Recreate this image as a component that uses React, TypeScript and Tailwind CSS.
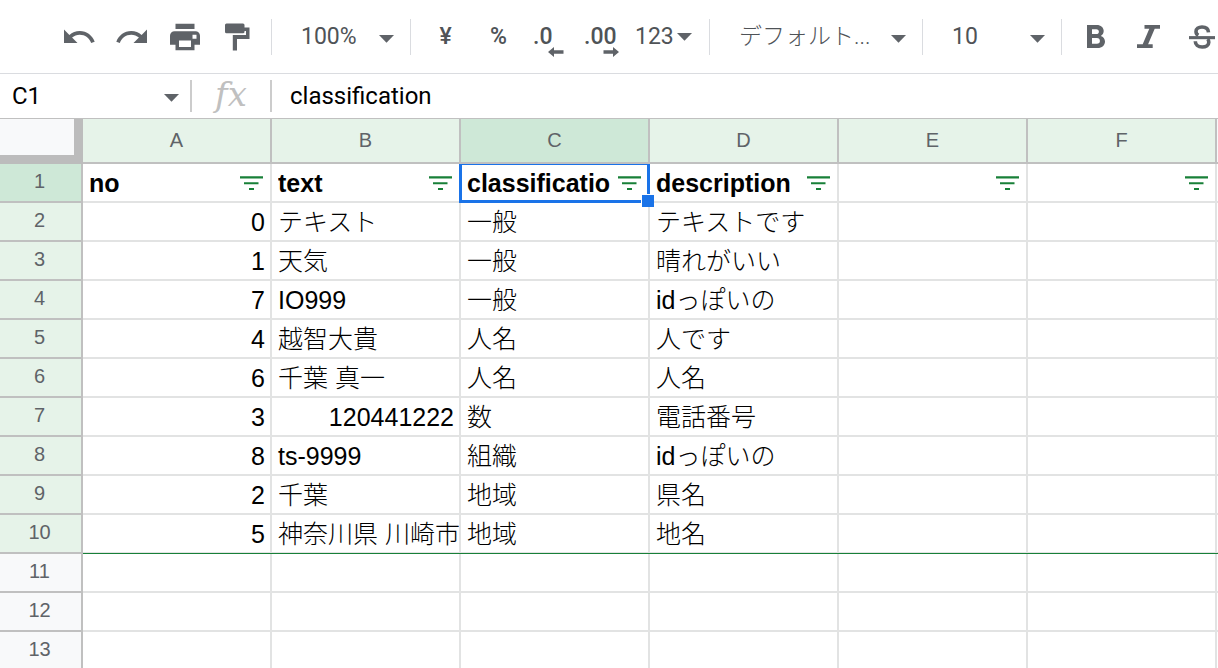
import type { ReactNode } from "react";

type Row = { no: string; text: string; cls: string; desc: string };

const columns = ["A", "B", "C", "D", "E", "F"];
const titles = ["no", "text", "classification", "description", "", ""];

const rows: Row[] = [
  { no: "0", text: "テキスト", cls: "一般", desc: "テキストです" },
  { no: "1", text: "天気", cls: "一般", desc: "晴れがいい" },
  { no: "7", text: "IO999", cls: "一般", desc: "idっぽいの" },
  { no: "4", text: "越智大貴", cls: "人名", desc: "人です" },
  { no: "6", text: "千葉 真一", cls: "人名", desc: "人名" },
  { no: "3", text: "120441222", cls: "数", desc: "電話番号" },
  { no: "8", text: "ts-9999", cls: "組織", desc: "idっぽいの" },
  { no: "2", text: "千葉", cls: "地域", desc: "県名" },
  { no: "5", text: "神奈川県 川崎市", cls: "地域", desc: "地名" },
];

const emptyRows = [11, 12, 13];

const Caret = () => (
  <svg className="block h-2 w-[15px]" viewBox="0 0 15 8" fill="#5f6368" aria-hidden="true">
    <path d="M0 0h15L7.500 7.800z" />
  </svg>
);

const Separator = () => <div className="h-9 w-px shrink-0 bg-[#dadce0]" />;

function ToolButton({ label, children }: { label: string; children: ReactNode }) {
  return (
    <button
      type="button"
      aria-label={label}
      className="relative flex h-12 w-[53px] shrink-0 items-center justify-center font-medium"
    >
      {children}
    </button>
  );
}

function ToolSelect({ label, value, width }: { label: string; value: string; width: string }) {
  return (
    <div className={`relative h-12 shrink-0 ${width}`}>
      <select
        aria-label={label}
        className="h-full w-full appearance-none bg-transparent pt-0.5 pl-[29px] outline-none"
      >
        <option>{value}</option>
      </select>
      <div className="pointer-events-none absolute right-4 top-[22px]">
        <Caret />
      </div>
    </div>
  );
}

const icon = "block h-9 w-9";

function Toolbar() {
  return (
    <div
      role="toolbar"
      aria-label="ツールバー"
      className="flex h-[74px] shrink-0 items-center overflow-hidden border-b border-[#dadce0] pl-[52px] text-[23px] text-[#4f5357]"
    >
      <ToolButton label="元に戻す">
        <svg className={icon} viewBox="0 0 24 24" fill="#5f6368">
          <path d="M12.500 8c-2.650 0-5.050.99-6.900 2.600L2 7v9h9l-3.620-3.620c1.390-1.160 3.160-1.880 5.120-1.880 3.540 0 6.550 2.310 7.600 5.500l2.370-.78C21.080 11.030 17.150 8 12.500 8z" />
        </svg>
      </ToolButton>
      <ToolButton label="やり直し">
        <svg className={icon} viewBox="0 0 24 24" fill="#5f6368">
          <path d="M18.400 10.600C16.550 8.990 14.150 8 11.500 8c-4.650 0-8.580 3.030-9.960 7.220L3.900 16c1.050-3.190 4.050-5.500 7.600-5.500 1.950 0 3.730.72 5.120 1.880L13 16h9V7l-3.600 3.600z" />
        </svg>
      </ToolButton>
      <ToolButton label="印刷">
        <svg className={icon} viewBox="0 0 36 36" fill="#5f6368">
          <path
            fillRule="evenodd"
            d="M8.500 4.700h19v5.200h-19zM7.500 12.200h21a4.500 4.500 0 0 1 4.500 4.500v9h-5.500v5.500h-19v-5.500H3v-9a4.500 4.500 0 0 1 4.500-4.500zM12 21.500v6.500h12v-6.500zM25.500 15.800v4h4v-4z"
          />
        </svg>
      </ToolButton>
      <ToolButton label="書式を貼り付け">
        <svg className={icon} viewBox="0 0 36 36" fill="#5f6368">
          <path d="M6.500 4.500h16.500a1.500 1.500 0 0 1 1.500 1.500v2.500h5V20H17v11.500h-4.200V16h13.200v-4h-1.500v.7a1.500 1.500 0 0 1-1.500 1.500H6.500A1.500 1.500 0 0 1 5 12.700V6a1.500 1.500 0 0 1 1.500-1.500z" />
        </svg>
      </ToolButton>
      <div className="w-[7px] shrink-0" />
      <Separator />
      <ToolSelect label="ズーム" value="100%" width="w-[138px]" />
      <Separator />
      <div className="w-2 shrink-0" />
      <ToolButton label="通貨の表示形式">
        <span className="pt-0.5">¥</span>
      </ToolButton>
      <ToolButton label="パーセント表示形式">
        <span className="pt-0.5">%</span>
      </ToolButton>
      <ToolButton label="小数点以下の桁数を減らす">
        <span className="w-full pt-0.5 pl-2 text-left">.0</span>
        <svg className="absolute right-3.5 top-[34px] h-2.5 w-4" viewBox="0 0 16 10" fill="#5f6368">
          <path d="M0 5l6-5v3.200h9.500v3.600H6V10z" />
        </svg>
      </ToolButton>
      <ToolButton label="小数点以下の桁数を増やす">
        <span className="w-full pt-0.5 pl-1.5 text-left">.00</span>
        <svg className="absolute right-3 top-[34px] h-2.5 w-4" viewBox="0 0 16 10" fill="#5f6368">
          <path d="M16 5l-6-5v3.200H.5v3.600H10V10z" />
        </svg>
      </ToolButton>
      <button type="button" className="flex h-12 w-[78px] shrink-0 items-center gap-[3px] pl-1">
        <span className="pt-0.5">123</span>
        <Caret />
      </button>
      <Separator />
      <ToolSelect label="フォント" value="デフォルト..." width="w-[212px] font-light" />
      <Separator />
      <ToolSelect label="フォント サイズ" value="10" width="w-[138px]" />
      <Separator />
      <div className="w-[7px] shrink-0" />
      <ToolButton label="太字">
        <svg className="block h-[23px] w-[18px]" viewBox="0 0 18 23" fill="#5f6368">
          <path
            fillRule="evenodd"
            d="M0 0h9.800c4 0 6.900 2.500 6.900 6.100 0 2.200-1.200 3.900-2.900 4.800 2.500.8 4.200 2.900 4.200 5.600 0 3.800-3 6.500-7.400 6.500H0zM5 4.200v4.900h4.300c1.600 0 2.600-1 2.600-2.400s-1-2.500-2.600-2.500zM5 13.100v5.600h4.900c1.900 0 3-1.100 3-2.800s-1.100-2.800-3-2.800z"
          />
        </svg>
      </ToolButton>
      <ToolButton label="斜体">
        <svg className="block h-[23px] w-[23px]" viewBox="0 0 23 23" fill="#5f6368">
          <path d="M7.500 0H23v3.800h-5.300l-6.600 15.400h4.600V23H0v-3.800h5.700L12.300 3.800H7.500z" />
        </svg>
      </ToolButton>
      <ToolButton label="取り消し線">
        <svg className="block h-6 w-[26px]" viewBox="0 0 26 24" fill="none">
          <path d="M19.500 7.300C19.300 3.800 16.700 2 13 2 9.500 2 7 3.800 7 6.500c0 1.800.8 3 2.300 3.900" stroke="#5f6368" strokeWidth="3.600" />
          <path d="M6.300 16.200c0 3.600 2.700 5.800 6.900 5.800 3.900 0 6.600-1.900 6.600-4.800 0-1.300-.4-2.300-1.200-3.100" stroke="#5f6368" strokeWidth="3.600" />
          <path d="M0 11.100h26v3.100H0z" fill="#5f6368" />
        </svg>
      </ToolButton>
    </div>
  );
}

function FormulaBar() {
  return (
    <div className="flex h-[45px] shrink-0 items-center border-b border-[#c0c0c0] text-2xl text-black">
      <div className="relative h-full w-[190px] shrink-0">
        <input
          aria-label="名前ボックス"
          defaultValue="C1"
          className="h-full w-full bg-transparent pl-3 outline-none"
        />
        <div className="pointer-events-none absolute right-[11px] top-5">
          <Caret />
        </div>
      </div>
      <div className="h-8 w-0.5 shrink-0 bg-[#cccccc]" />
      <label
        htmlFor="formula"
        className="w-[78px] shrink-0 pb-1 text-center font-['DejaVu_Serif',serif] text-[34px] leading-10 text-[#c0c0c0] italic"
      >
        fx
      </label>
      <div className="h-8 w-0.5 shrink-0 bg-[#cccccc]" />
      <input
        id="formula"
        defaultValue="classification"
        className="h-full min-w-0 flex-1 bg-transparent pl-[18px] outline-none"
      />
    </div>
  );
}

const FilterIcon = () => (
  <svg className="block h-3.5 w-[23px]" viewBox="0 0 23 14" fill="#188038">
    <path d="M0 .3h23v2.100H0zM4 6.200h14.500v2.100H4zM9 12h5v2H9z" />
  </svg>
);

function RowHeader({ n, tone }: { n: number; tone: string }) {
  return (
    <th
      scope="row"
      className={`h-[39px] border-r-2 border-b-2 border-[#c0c0c0] p-0 pr-0.5 pb-[3px] text-xl leading-[34px] font-normal text-[#5f6368] ${tone}`}
    >
      {n}
    </th>
  );
}

const cell = "relative h-[39px] border-r-2 border-b-2 border-[#e2e3e3] p-0";
const lastRow =
  "after:absolute after:-right-0.5 after:-bottom-0.5 after:left-0 after:h-px after:bg-[#188038]";

function Sheet() {
  return (
    <main className="min-h-0 flex-1 overflow-hidden font-['Liberation_Sans','Noto_Sans_CJK_JP',sans-serif]">
      <table className="w-full table-fixed border-separate border-spacing-0 text-[25px] leading-[35px] text-black">
        <colgroup>
          <col className="w-[83px]" />
          {columns.map((c) => (
            <col key={c} className="w-[189px]" />
          ))}
          <col />
        </colgroup>
        <thead>
          <tr>
            <td className="h-[45px] border-r-[9px] border-b-[9px] border-[#bcbcbc] bg-[#f8f9fa] p-0" />
            {columns.map((c) => (
              <th
                key={c}
                scope="col"
                className={`h-[45px] border-r-2 border-b-2 border-[#c0c0c0] p-0 text-xl leading-[43px] font-normal text-[#5f6368] ${
                  c === "C" ? "bg-[#cee8d7]" : "bg-[#e6f3e9]"
                }`}
              >
                {c}
              </th>
            ))}
            <td className="border-b-2 border-[#c0c0c0] bg-[#f8f9fa] p-0" />
          </tr>
        </thead>
        <tbody>
          <tr>
            <RowHeader n={1} tone="bg-[#cee8d7]" />
            {titles.map((t, i) => (
              <td key={i} className={cell}>
                <div className="flex items-center gap-2 pr-[7px] pl-1.5">
                  <div className="h-[37px] min-w-0 flex-1 overflow-hidden pt-0.5 font-bold whitespace-nowrap">
                    {t}
                  </div>
                  <button type="button" aria-label={`フィルタ ${columns[i]}`} className="shrink-0">
                    <FilterIcon />
                  </button>
                </div>
                {columns[i] === "C" && (
                  <>
                    <div className="pointer-events-none absolute -inset-x-0.5 top-0 -bottom-0.5 border-3 border-t border-[#1a73e8]" />
                    <div className="absolute -right-1.5 -bottom-1.5 z-10 h-[13px] w-[13px] border-t border-l border-white bg-[#1a73e8]" />
                  </>
                )}
              </td>
            ))}
            <td className="border-b-2 border-[#e2e3e3] p-0" />
          </tr>
          {rows.map((r, i) => {
            const edge = i === rows.length - 1 ? lastRow : "";
            const values = [r.no, r.text, r.cls, r.desc, "", ""];
            return (
              <tr key={r.no}>
                <RowHeader n={i + 2} tone="bg-[#e6f3e9]" />
                {values.map((v, j) => (
                  <td key={j} className={`${cell} ${edge}`}>
                    <div
                      className={`h-[37px] overflow-hidden pt-0.5 pl-1.5 font-light whitespace-nowrap ${
                        /^\d+$/.test(v) ? "pr-[5px] text-right" : ""
                      }`}
                    >
                      {v}
                    </div>
                  </td>
                ))}
                <td className={`relative border-b-2 border-[#e2e3e3] p-0 ${edge}`} />
              </tr>
            );
          })}
          {emptyRows.map((n) => (
            <tr key={n}>
              <RowHeader n={n} tone="bg-[#f8f9fa]" />
              {columns.map((c) => (
                <td key={c} className={cell} />
              ))}
              <td className="border-b-2 border-[#e2e3e3] p-0" />
            </tr>
          ))}
        </tbody>
      </table>
    </main>
  );
}

export default function App() {
  return (
    <div
      lang="ja"
      className="flex h-screen flex-col overflow-hidden bg-white font-['Roboto','Noto_Sans_CJK_JP',sans-serif]"
    >
      <Toolbar />
      <FormulaBar />
      <Sheet />
    </div>
  );
}
